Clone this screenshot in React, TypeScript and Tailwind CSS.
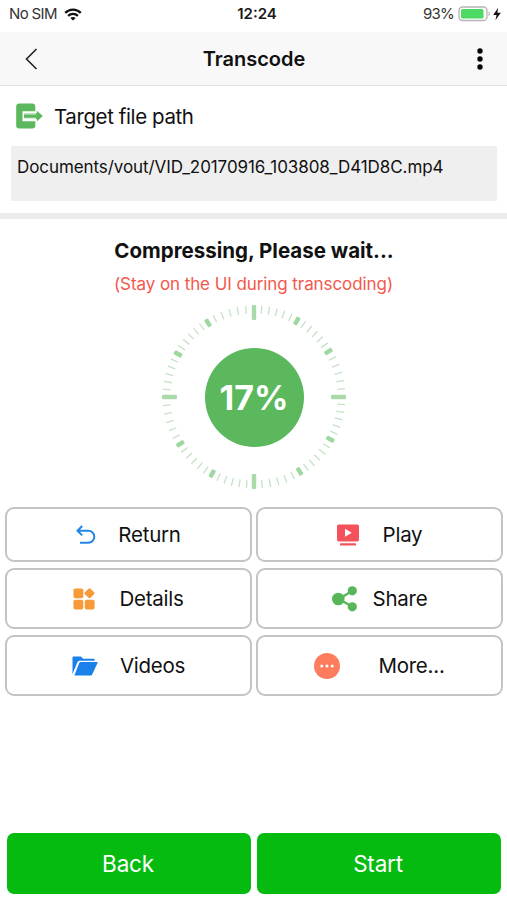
import type { ReactNode } from "react";

// Angles of the thick marks; thin marks split each gap in six
const majors = [0, 29.4, 58.6, 90, 119, 148.5, 180, 208.6, 237.6, 270, 299.5, 328.2, 360];

function StatusBar() {
  return (
    <div className="relative flex h-8 items-center justify-between pb-1 pl-[9px] pr-[4px] text-[15px] text-[#333]">
      <div className="flex items-center gap-[7px]">
        <span className="tracking-[-0.65px]">No SIM</span>
        <svg width="18" height="13" viewBox="0 0 18 13" fill="none" stroke="#111" strokeWidth="2.3">
          <path d="M1.2 4.9C5.6.6 12.4.6 16.8 4.9" />
          <path d="M4.1 7.9c2.8-2.6 7-2.6 9.8 0" />
          <path d="M9 12.6 6.3 9.9c1.6-1.3 3.8-1.3 5.4 0z" fill="#111" stroke="none" />
        </svg>
      </div>
      <span className="absolute left-1/2 -translate-x-1/2 pl-[7px] font-semibold text-[#1a1a1a]">
        12:24
      </span>
      <div className="flex items-center">
        <span className="tracking-[-0.8px]">93%</span>
        <svg className="ml-1" width="45" height="16" viewBox="0 0 45 16">
          <rect x="1" y="1" width="28" height="13.5" rx="3.6" fill="#fff" stroke="#b5b5b5" strokeWidth="1.3" />
          <rect x="3" y="3" width="22.5" height="9.5" rx="1.6" fill="#4cd964" />
          <path d="M30.5 5.4v4.8c1.8-.6 1.8-4.2 0-4.8z" fill="#b5b5b5" />
          <path d="M40.2 1.8 35.2 9h3.4L37.4 14.2l5.4-7.4h-3.5z" fill="#111" />
        </svg>
      </div>
    </div>
  );
}

function NavBar() {
  return (
    <header className="flex h-[54px] items-center justify-between border-b border-[#e2e2e2] bg-[#f8f8f8] pl-[25px] pr-[23px]">
      <svg width="13" height="22" viewBox="0 0 13 22" fill="none" stroke="#222" strokeWidth="1.6">
        <path d="M11.5 1 1.5 11l10 10" />
      </svg>
      <h1 className="pr-[6px] text-[20px] font-semibold text-[#111]">Transcode</h1>
      <svg width="8" height="24" viewBox="0 0 8 24" fill="#000">
        <circle cx="4" cy="4" r="2.7" />
        <circle cx="4" cy="12" r="2.7" />
        <circle cx="4" cy="20" r="2.7" />
      </svg>
    </header>
  );
}

function Dial() {
  return (
    <div className="relative flex h-[186px] w-[186px] items-center justify-center">
      <svg className="absolute inset-0" width="186" height="186" viewBox="-93 -93 186 186">
        {majors.slice(0, -1).map((start, i) => {
          const step = (majors[i + 1] - start) / 6;
          const cardinal = i % 3 === 0;
          return (
            <g key={start}>
              <rect
                x="-2.2"
                y={cardinal ? -92 : -91.5}
                width="4.4"
                height={cardinal ? 15 : 8.5}
                rx="1.2"
                transform={`rotate(${start})`}
                fill={cardinal ? "#a9daa9" : "#9fd7a0"}
              />
              {[1, 2, 3, 4, 5].map((n) => (
                <line
                  key={n}
                  y1="-91.5"
                  y2="-83.5"
                  transform={`rotate(${start + n * step})`}
                  stroke="#c6e2c6"
                  strokeWidth="1.3"
                />
              ))}
            </g>
          );
        })}
      </svg>
      <div className="relative flex h-[99px] w-[99px] items-center justify-center rounded-full bg-[#5cb85c] text-[34px] font-bold text-white">
        17%
      </div>
    </div>
  );
}

const actions: { label: string; gap: string; icon: ReactNode }[] = [
  {
    label: "Return",
    gap: "gap-[22px]",
    icon: (
      <svg width="20" height="20" viewBox="0 0 20 20" fill="none" stroke="#2186e6" strokeWidth="2">
        <path d="M6.2 1 1.5 5.7l4.7 4.7M1.8 5.7h10.5a6 6 0 0 1 0 12H4" />
      </svg>
    ),
  },
  {
    label: "Play",
    gap: "gap-[24px]",
    icon: (
      <svg width="22" height="22" viewBox="0 0 22 22" fill="#f5515a">
        <rect width="22" height="17" y=".5" rx="1.8" />
        <rect x="3" y="19.2" width="16" height="2.2" rx=".6" />
        <path d="M8 4.7v8l6.8-4z" fill="#fff" />
      </svg>
    ),
  },
  {
    label: "Details",
    gap: "gap-[24px]",
    icon: (
      <svg width="22" height="22" viewBox="0 0 22 22" fill="#f79a38">
        <rect x=".5" y=".5" width="9.8" height="9.8" rx="1.8" />
        <rect x=".5" y="11.8" width="9.8" height="9.8" rx="1.8" />
        <rect x="11.8" y="11.8" width="9.8" height="9.8" rx="1.8" />
        <rect x="12.6" y="1.4" width="7.8" height="7.8" rx="1.4" transform="rotate(45 16.5 5.3)" />
      </svg>
    ),
  },
  {
    label: "Share",
    gap: "gap-[16px]",
    icon: (
      <svg width="25" height="26" viewBox="0 0 25 26" fill="#57b65a">
        <path d="M20.4 4.8 7 13l13.4 7.8" fill="none" stroke="#57b65a" strokeWidth="2.3" />
        <circle cx="6.3" cy="13" r="6.3" />
        <circle cx="20.3" cy="4.8" r="4.6" />
        <circle cx="20.3" cy="20.8" r="4.6" />
      </svg>
    ),
  },
  {
    label: "Videos",
    gap: "gap-[22px]",
    icon: (
      <svg width="26" height="20" viewBox="0 0 26 20" fill="#1a80ea">
        <path d="M.5 18.3V1.6C.5.9.9.5 1.6.5h7.2l2.4 2.2h10.4c.7 0 1.1.4 1.1 1v1.1H8.2c-1.4 0-2.4.6-3 1.9z" />
        <path d="M8.6 6.1h16.3c.7 0 .9.4.6 1l-5.3 11.3c-.3.7-.8 1-1.5 1H2.4L7.2 7c.3-.6.7-.9 1.4-.9z" />
      </svg>
    ),
  },
  {
    label: "More...",
    gap: "gap-[38px]",
    icon: (
      <svg width="26" height="26" viewBox="0 0 26 26" fill="#fff">
        <circle cx="13" cy="13" r="13" fill="#fd7c5e" />
        <circle cx="7.8" cy="13" r="1.5" />
        <circle cx="13" cy="13" r="1.5" />
        <circle cx="18.2" cy="13" r="1.5" />
      </svg>
    ),
  },
];

export default function App() {
  return (
    <div className="flex h-[900px] w-[507px] flex-col overflow-hidden bg-white font-['Inter',sans-serif] text-[#111]">
      <StatusBar />
      <NavBar />

      <section className="h-[133px] border-b-[6px] border-[#ececec] pl-[11px] pr-[10px] pt-4">
        <div className="flex h-7 items-center gap-[11px] pl-[5px]">
          <svg width="27" height="26" viewBox="0 0 27 26">
            <path
              d="M3 .5h13.5c1.7 0 2.8 1.1 2.8 2.8v4.9H6.5v10h12.8v4.5c0 1.7-1.1 2.8-2.8 2.8H3C1.3 25.5.2 24.4.2 22.7V3.3C.2 1.6 1.3.5 3 .5z"
              fill="#5cb85c"
            />
            <path d="M8 10.2h12.8V7.8l6 5.3-6 5.3v-2.5H8z" fill="#5cb85c" />
            <path d="M8 10.8h12M8 15.4h12" stroke="#d9f0d9" strokeWidth="1.3" />
          </svg>
          <h2 className="pt-0.5 text-[20.5px] tracking-[-0.4px]">Target file path</h2>
        </div>
        <p className="mt-4 h-[55px] bg-[#efefef] pl-[6px] pt-[9px] text-[17px] leading-6 tracking-[-0.08px]">
          Documents/vout/VID_20170916_103808_D41D8C.mp4
        </p>
      </section>

      <section className="flex flex-col items-center pt-4">
        <h2 className="pl-px text-[20.5px] leading-8 font-bold">Compressing, Please wait...</h2>
        <p className="mt-[5px] text-[17px] leading-6 tracking-[-0.08px] text-[#f4584c]">
          (Stay on the UI during transcoding)
        </p>
        <div className="mt-2 pl-px">
          <Dial />
        </div>
      </section>

      <div className="mt-[17px] grid grid-cols-2 grid-rows-[55px_61px_61px] gap-x-1 gap-y-1.5 pl-[5px] pr-1">
        {actions.map(({ label, gap, icon }) => (
          <button
            key={label}
            className={`flex items-center justify-center rounded-[9px] border-2 border-[#c4c4c4] text-[20.5px] tracking-[-0.25px] ${gap}`}
          >
            {icon}
            <span className="pt-0.5">{label}</span>
          </button>
        ))}
      </div>

      <div className="mt-auto mb-[6px] grid h-[61px] grid-cols-2 gap-1.5 pl-[7px] pr-[6px] text-[22.5px] tracking-[-0.2px] text-white">
        <button className="rounded-[7px] bg-[#05bb10] pr-0.5">Back</button>
        <button className="rounded-[7px] bg-[#05bb10] pr-0.5">Start</button>
      </div>
    </div>
  );
}
